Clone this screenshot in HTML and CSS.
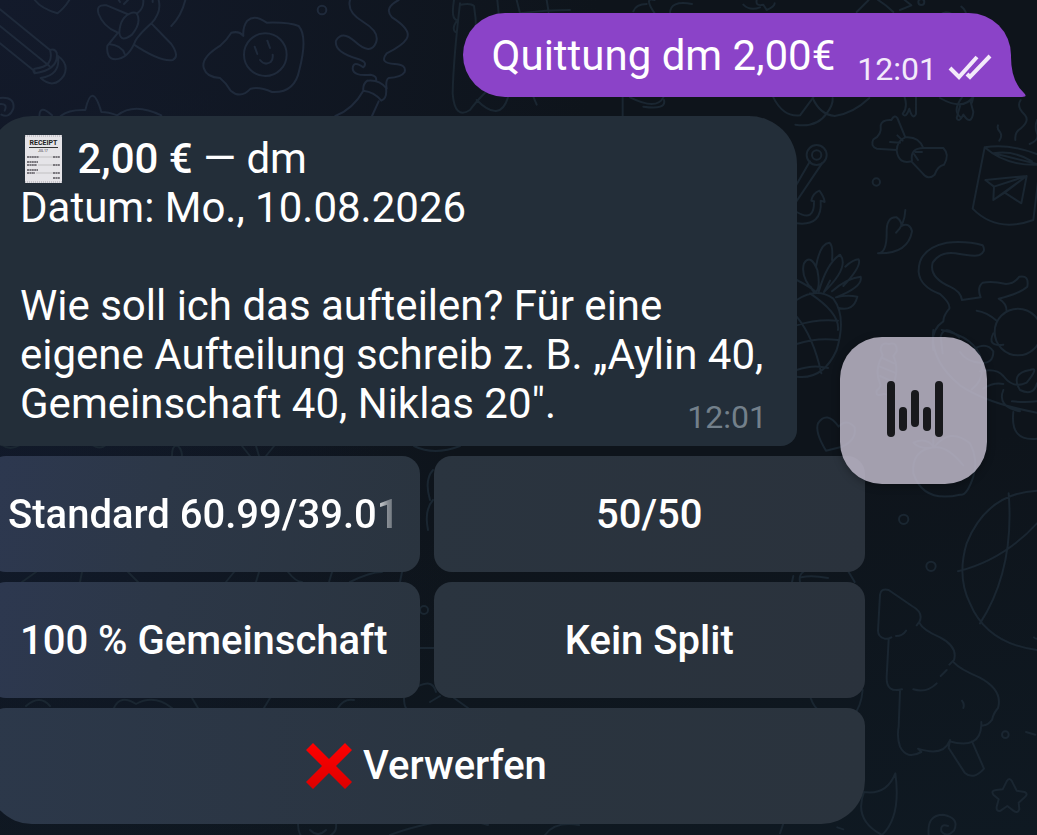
FILE: index.html
```html
<!DOCTYPE html>
<html lang="de">
<head>
<meta charset="utf-8">
<meta name="viewport" content="width=device-width, initial-scale=1">
<title>Chat</title>
<link rel="stylesheet" href="styles.css">
</head>
<body>
<svg class="wallpaper" viewBox="0 0 1037 835" preserveAspectRatio="xMidYMid slice" aria-hidden="true">
  <!-- sword, plane, egg, glove -->
  <g transform="scale(.33333)">
    <path d="M0 28L150 150M0 78L148 198M0 130L104 214M150 150q14-6 20 8q8 50-66 62q-8-10 0-14q60-6 46-56M174 168q34 24 18 58q-30 44-70 8q60-8 52-66M104 0q20 26 68 40q20-14 36-40"/>
    <path d="M382 42L320 16Q286 12 296 42Q310 80 350 96M412 44Q424 70 396 104Q362 130 358 98Q360 50 396 38q14-2 16 6M430 0q2 24-18 40M476 0q6 24-4 44Q466 58 454 70Q410 110 404 128Q384 176 346 178Q318 176 322 138L354 98M326 132q40 4 48 30M454 70L514 132Q540 170 518 180Q480 186 402 134M556 0Q544 48 514 78M372 12l12-12M356 0l4 6M458 0v6"/>
    <path d="M730 108Q718 92 694 98Q680 120 662 136Q600 174 612 206Q620 232 660 234Q680 250 692 272Q722 298 752 266Q780 260 816 276Q884 280 898 210Q924 110 896 78Q868 66 800 68Q764 42 742 62Q728 80 730 108z"/>
    <circle cx="796" cy="164" r="64"/><path d="M764 140l8 22M802 122l8 22M780 180q14 18 32 6q8-8 6-22"/><circle cx="966" cy="30" r="13"/>
    <path d="M1050 0Q1040 36 1090 66Q1140 96 1128 128Q1112 168 1064 124Q1026 90 1008 122Q1002 156 1072 176Q1106 186 1090 202Q1060 180 1058 206Q1060 230 1112 224Q1132 228 1128 244M1196 0Q1150 24 1176 52Q1236 90 1220 116Q1208 136 1160 160Q1136 190 1184 192Q1220 194 1214 216Q1204 232 1166 234Q1156 240 1160 266M1102 242q-14 10-12 30q34 4 54 30q18-6 14-38q-20-26-56-22M1090 272Q1060 326 1006 348M1136 304l-20 44"/>
    <path d="M0 294Q46 290 40 326Q28 356 4 344M0 312q24-2 14 20M118 350q0-40 38-4M182 348q24-20 74-18q20-88 48 6q20 0 48 10q50-40 132 0"/>
  </g>
  <!-- shapes behind the outgoing bubble -->
  <g transform="translate(450 0) scale(.33333)">
    <path d="M12 0Q2 60 22 60Q4 86 16 96M30 10Q10 180 8 280Q14 360 60 330Q110 260 250 160M32 14q30-6 40 4q10 60 4 110M142 0q8 60 6 120M200 0l10 40q80-10 150-10M290 0l6 36M550 34q8-22 40-22M614 40Q580-10 614 0M660 40q0-40 66-28M880 14q20 20 50 8M920 0q-4 20 20 14l10 16q24-10 24-20M1220 36L1256 0M1330 36q-20-20-46-36M1350 30l34-14-20-16M1456 60q30-40 60-10q10 30-20 40q-20-20-2-30M1534 20q30 20 4 90l-40 10M518 292v60M540 292q80 40 100 0M580 320q70 10 62-20M970 292q30 60 80 54l40-54M1364 292q10 30-6 50q10 14 20-16q10 36 20 16v-50M1536 292q-30 40-4 60M250 290l10 24M80 300q70 70 94-8"/><circle cx="1414" cy="6" r="9"/><circle cx="1564" cy="204" r="12"/>
  </g>
  <!-- anchor, bow, mug, leaf, cat, pineapple -->
  <g transform="translate(780 90) scale(.33333)">
    <path d="M46 104Q110 114 140 70Q160 44 158 24M98 24Q120 74 164 78Q220 70 268 24M480 24q70 40 100-4q-6 28-6 16M540 48l-10 36q6 16 20-10q24 36 30-8l-8-30"/>
    <circle cx="110" cy="195" r="30"/><circle cx="110" cy="195" r="14"/>
    <path d="M90 214L40 300M126 220L48 336M50 366q54 32 52-32l-8-2q4-22 24-30q14 18 16 34l-12-4q6 78-72 68"/>
    <path d="M376 142L352 84q-8-12-18 6q-28-2-32 16q4 30-22 42q-10 20 10 28l60 4M376 142q40-4 54 32h60q20 20 2 50q-20 4-28 30q-20 18-36-4l-34-36Q356 224 350 182Q352 150 376 142M430 174q-40 0-34 38M352 136l16 16M330 156l30 2M406 186l20 0M402 192l12 18"/>
    <circle cx="289" cy="276" r="11"/>
    <path d="M294 490Q320 490 320 430Q318 380 350 382Q366 394 364 408Q390 396 396 424Q384 492 294 490M348 428Q374 404 376 360"/>
    <path d="M614 172L578 356Q650 430 760 390L780 224Q680 230 614 172M614 172Q690 160 775 194M640 190q60 14 138 34M640 190q60-10 116 24M616 270L740 258L724 340L674 308L640 330L642 290z M642 290L740 258L640 330M674 308L740 258M722 30Q708 50 734 74Q752 94 716 120Q704 130 706 150M654 106q-4 10 6 20q8 12-2 26M771 90q-8 20 0 40t-22 32"/>
    <path d="M546 630Q542 604 510 590Q446 562 458 518Q480 484 526 490Q580 500 596 496Q620 486 608 466Q560 452 500 458Q414 476 416 546Q420 590 480 612Q512 640 508 656Q490 676 490 694Q450 720 460 780M546 630l56-8q-12-30 6-44q28-6 70 4q24 0 40-22q30-6 24 30Q720 610 656 626q24 14 24 38M590 662q30 4 60 30M482 740q10-40 56 2M482 740l6 50"/>
    <circle cx="714" cy="726" r="70"/><path d="M640 730q-20 40 30 34"/>
    <path d="M92 590l10 16Q60 560 72 520Q92 490 112 540Q122 590 108 606Q90 590 50 570M108 530Q120 460 148 458Q160 466 156 510M116 606Q140 520 180 494Q210 530 132 606M196 530q24-22 40-22q10 20-46 80M156 604Q200 564 242 560Q250 590 168 622Q200 614 232 620Q220 666 176 654M132 606l18-34M50 630Q110 590 160 626Q200 680 170 780Q130 870 50 860M50 706q60-20 124-14M50 762q60-20 124-12M50 840q50-18 94-6M90 610q90 60 84 110M50 680Q100 740 124 850"/>
  </g>
  <!-- heart, candy, cat body, peach, ball -->
  <g transform="translate(780 330) scale(.33333)">
    <path d="M138 362Q104 306 114 280Q140 240 176 290Q200 264 224 292Q230 330 186 350zM302 60q0-24 24-18q26-8 24 22l-10 14q20 40-4 96q20 20-6 26q-10-10-20-8q-24 10-20-10q16-12 10-22Q282 120 308 76zM308 84l34 16M300 110l44 18M300 138l36 16"/>
    <path d="M460 0Q448 90 540 166Q620 220 771 248M485 0q100 20 120 90q10 60-30 88M540 66q20 30 60 32q40 6 40-34q-20-30-60-6M600 124q50-10 70 14q30 40 70 20q40-50 10-38q-60 10-30 60q40 20 51-20M610 176q30-20 60-14M670 180q-20 50 50 64M696 214q40 4 75 0M700 246q-10 90 71 80"/>
    <path d="M462 352Q510 290 570 340Q596 390 580 440Q560 500 540 494Q430 520 400 430Q394 360 462 352M462 352q40-6 88 54M462 352Q420 360 400 338Q440 320 462 352M460 320v32"/>
    <circle cx="371" cy="568" r="14"/><circle cx="453" cy="709" r="14"/>
    <path d="M771 482Q620 490 560 640Q530 740 570 820Q620 940 771 960M686 490Q704 720 600 880M534 724Q670 690 771 580M60 756q-4-22 10-30M36 756l4-18M64 742q30-8 80 2M206 726l18 30"/>
  </g>
  <!-- tree, star, moon, swirl -->
  <g transform="translate(780 560) scale(.33333)">
    <path d="M334 232q-10 6-20 4q-20-6-20-24L300 104q2-20 26-14L396 138Q432 158 418 186l-8 10M348 228q20 0 30-16M326 238L320 350Q318 400 366 388M418 188Q428 210 480 232Q534 260 522 300L508 314M500 330l-18 18M470 370q-30 30-70 18M522 308Q540 328 598 352Q670 390 654 444Q640 460 636 480Q620 500 604 496Q600 570 508 544Q490 590 414 566L424 576Q380 600 360 560Q350 530 356 500L360 394M604 486v14M510 540l-4 24L554 638Q580 662 612 626L576 544M546 422q8 10 4 22"/>
    <circle cx="676" cy="524" r="10"/>
    <path d="M738 516l28 8M680 664q8-14 16 0l14 28l24 4q12 6 0 16l-18 16l2 20q-4 14-18 4l-18-14l-20 14q-14 4-12-12l6-22l-16-14q-8-12 8-14l20-2zM252 696Q320 706 346 640Q364 770 306 825Q220 780 252 696M446 825Q440 764 490 764Q540 774 522 812Q500 834 484 814Q480 790 504 798M172 802l18 6M92 414q10 30 30 40M248 390q-4 50-30 80M0 820l10-30M762 232q6 6 9 4"/>
  </g>
  <!-- strips between the button rows -->
  <path d="M2 445q8 6 18 0M92 445q8 5 14 0M172 456q0-12 6-10q4 4 4 10M242 446l8 10M256 446l3 10M274 446l-8 10M414 446q20 10 46 0M22 582l14-10M82 572l-2 10M128 572l10 10M234 572l-8 10M256 582l3-10M288 572q8 10 14 10M332 572l-3 10M350 582q20-10 32-10M402 572l-2 10M430 500q-6-20 3-30M428 530q-4-20 5-30M420 648h14M26 706q14-12 24 0M114 708q6-14 22-4q18-10 36 4M192 698l6 10M270 698l-6 10M338 708q6-10 16-8M412 690q20-14 24 2M404 698q0 14 8 12M430 702l10-6M454 698l14 10M298 824q0 20 20 16q20-4 18-16M310 830q8 8 16 0M390 835q60-22 98-10M545 835q10-14 34-10"/>
  <circle cx="424" cy="610" r="4"/>
</svg>

<main class="chat">
  <article class="sent">
    <p>Quittung dm 2,00€</p>
    <time class="sent-time">12:01</time>
    <svg class="checks" viewBox="0 0 44 26" role="img" aria-label="Gelesen"><path d="M2 14L11 23L29 3M19 20L22 23L42 2"/></svg>
    <svg class="tail" viewBox="0 0 30 40" aria-hidden="true"><path d="M0 0H15Q15 24 28 36Q32 40 26 40H0z"/></svg>
  </article>

  <section class="thread">
    <article class="received">
      <p><svg class="receipt" viewBox="0 0 37 48" role="img" aria-label="Beleg"><path d="M0 0H37V48H0z" fill="#e5e4e8"/><path d="M0 1H37M0 47H37" stroke="#a9a8b0" stroke-dasharray="1 1"/><text x="18.500" y="10" text-anchor="middle" font-size="7" font-weight="700">RECEIPT</text><path d="M4 12.500H33" stroke="#333"/><text x="18" y="17" text-anchor="middle" font-size="3">JUL 17</text><path d="M2 22H14M2 27H13M2 30H12M2 35H13M2 38H10M28 22H35M28 30H35M28 38H35M28 43H35" stroke="#55535a" stroke-width="1.500" stroke-dasharray="2 .4"/><path d="M14 22H28M13 30H28M11 38H28" stroke="#aaa" stroke-width=".6"/></svg> <strong>2,00 €</strong> — dm</p>
      <p>Datum: Mo., 10.08.2026</p>
      <p class="question">Wie soll ich das aufteilen? Für eine eigene Aufteilung schreib z. B. „Aylin 40, Gemeinschaft 40, Niklas 20".<time class="received-time">12:01</time></p>
    </article>
    <div class="keyboard">
      <button class="key" type="button"><span class="key-label fade">Standard 60.99/39.01</span></button>
      <button class="key" type="button"><span class="key-label">50/50</span></button>
      <button class="key" type="button"><span class="key-label">100 % Gemeinschaft</span></button>
      <button class="key" type="button"><span class="key-label">Kein Split</span></button>
      <button class="key wide" type="button"><svg class="cross" viewBox="0 0 46 46" aria-hidden="true"><defs><linearGradient id="red" x2="0" y2="1"><stop stop-color="#ff0000"/><stop offset="1" stop-color="#dc0000"/></linearGradient></defs><path fill="url(#red)" d="M7 0L23 16L39 0L46 7L30 23L46 39L39 46L23 30L7 46L0 39L16 23L0 7z"/></svg><span class="key-label">Verwerfen</span></button>
    </div>
  </section>
</main>

<button class="floating" type="button" aria-label="Audio">
  <svg class="bars" viewBox="0 0 56 56" aria-hidden="true"><path d="M4 4V52M16 30V46M28 13V42M40 30V46M52 4V52"/></svg>
</button>
</body>
</html>
```
FILE: styles.css
```css
* {
  box-sizing: border-box;
}

body {
  margin: 0;
  min-height: 100vh;
  position: relative;
  overflow: hidden;
  color: #fff;
  font-family: Roboto, "Noto Sans", sans-serif;
  font-size: 42px;
  line-height: 49px;
  background:
    radial-gradient(circle at 0 0, #131a2b, transparent 45%),
    radial-gradient(circle at 0 60%, #111a2a, transparent 40%),
    linear-gradient(170deg, #0e141b 60%, #0f1922);
}

p {
  margin: 0;
}

.wallpaper {
  position: absolute;
  inset: 0;
  width: 100%;
  height: 100%;
  fill: none;
  stroke: #1a2631;
  stroke-width: 2;
  stroke-linecap: round;
  stroke-linejoin: round;
}

.wallpaper g {
  stroke-width: 6;
}

.wallpaper g:first-of-type {
  stroke: #1f2a3b;
}

.chat {
  position: relative;
  display: flex;
  flex-direction: column;
  gap: 19px;
  padding: 13px 26px 11px 0;
}

.sent {
  position: relative;
  align-self: flex-end;
  display: flex;
  align-items: flex-end;
  height: 84px;
  padding: 0 19px 17px 29px;
  border-radius: 42px 42px 0 42px;
  background: #8b43c8;
}

.tail {
  position: absolute;
  right: -15px;
  bottom: 0;
  width: 30px;
  height: 40px;
  fill: #8b43c8;
}

.sent-time,
.received-time {
  font-size: 32px;
}

.sent-time {
  margin-left: 22px;
  line-height: 22px;
  color: #f3eafa;
}

.checks {
  width: 44px;
  height: 26px;
  margin-left: 11px;
  fill: none;
  stroke: #f3eafa;
  stroke-width: 4;
}

.thread {
  display: flex;
  flex-direction: column;
  gap: 10px;
  max-width: 877px;
  margin-left: -12px;
}

.received {
  max-width: 809px;
  padding: 18px 30px 18px 32px;
  border-radius: 44px 48px 16px 16px;
  background: #232e39;
}

.received-time {
  float: right;
  margin-top: 24px;
  line-height: 29px;
  color: #73808b;
}

.question {
  display: flow-root;
  height: 147px;
  margin-top: 49px;
}

.received strong {
  font-weight: 500;
}

.receipt {
  width: 37px;
  height: 48px;
  margin: 0 5px;
  vertical-align: bottom;
  fill: #222;
}

.keyboard {
  display: grid;
  grid-template-columns: repeat(2, minmax(0, 1fr));
  gap: 10px 14px;
}

.key {
  display: flex;
  align-items: center;
  justify-content: center;
  gap: 11px;
  height: 116px;
  padding: 2px 19px 0;
  border: 0;
  border-radius: 18px;
  color: #fff;
  font: 500 40px/48px Roboto, "Noto Sans", sans-serif;
  background: linear-gradient(100deg, #2a343f, #2a323c);
}

.key:nth-child(odd) {
  background: linear-gradient(100deg, #2d3850, #2c3747 40%, #2a343f);
}

.key.wide {
  grid-column: 1 / -1;
  padding-top: 0;
  border-radius: 18px 18px 44px 44px;
  background: linear-gradient(90deg, #2c384a, #2a343f 60%, #2a333d);
}

.key-label {
  overflow: hidden;
  white-space: nowrap;
}

.fade {
  mask-image: linear-gradient(90deg, #000 calc(100% - 26px), rgba(0, 0, 0, .4) calc(100% - 10px), rgba(0, 0, 0, .3));
}

.cross {
  width: 46px;
  height: 46px;
}

.floating {
  position: absolute;
  top: 337px;
  right: 50px;
  display: grid;
  place-items: center;
  width: 147px;
  height: 147px;
  padding: 0 0 4px 2px;
  border: 0;
  border-radius: 42px;
  background: rgba(194, 188, 205, .83);
  box-shadow: 0 2px 8px rgba(0, 0, 0, .3);
}

.bars {
  width: 56px;
  height: 56px;
  fill: none;
  stroke: #18191c;
  stroke-width: 8;
  stroke-linecap: round;
}
```
